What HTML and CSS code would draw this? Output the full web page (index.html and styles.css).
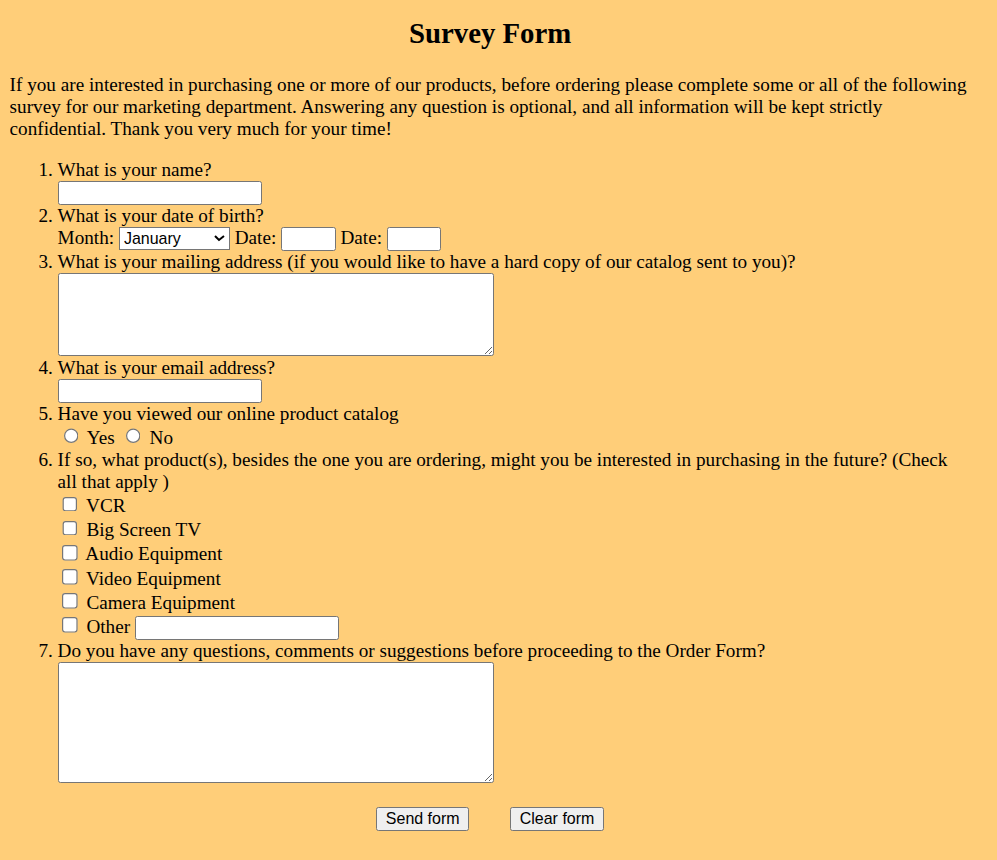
FILE: index.html
```html
<!DOCTYPE html>
<html lang="en">
<head>
<meta charset="utf-8">
<title>Survey Form</title>
<link rel="stylesheet" href="styles.css">
</head>
<body>
<h2 class="title">Survey Form</h2>
<p class="intro">If you are interested in purchasing one or more of our products, before ordering please complete some or all of the following survey for our marketing department. Answering any question is optional, and all information will be kept strictly confidential. Thank you very much for your time!</p>
<form class="survey">
<ol class="questions">
<li>What is your name?<br><input class="text" type="text"></li>
<li>What is your date of birth?<br>Month: <select class="month"><option>January</option><option>February</option><option>March</option><option>April</option><option>May</option><option>June</option><option>July</option><option>August</option><option>September</option><option>October</option><option>November</option><option>December</option></select> Date: <input class="small" type="text"> Date: <input class="small" type="text"></li>
<li>What is your mailing address (if you would like to have a hard copy of our catalog sent to you)?<br><textarea class="area"></textarea></li>
<li>What is your email address?<br><input class="text" type="text"></li>
<li>Have you viewed our online product catalog<br><input type="radio" name="viewed"> Yes <input type="radio" name="viewed"> No</li>
<li>If so, what product(s), besides the one you are ordering, might you be interested in purchasing in the future? (Check all that apply )<br>
<input type="checkbox"> VCR<br>
<input type="checkbox"> Big Screen TV<br>
<input type="checkbox"> Audio Equipment<br>
<input type="checkbox"> Video Equipment<br>
<input type="checkbox"> Camera Equipment<br>
<input type="checkbox"> Other <input class="text" type="text"></li>
<li>Do you have any questions, comments or suggestions before proceeding to the Order Form?<br><textarea class="area tall"></textarea></li>
</ol>
<p class="actions"><button type="submit" class="btn">Send form</button><button type="reset" class="btn">Clear form</button></p>
</form>
</body>
</html>
```
FILE: styles.css
```css
html {
  zoom: 1.2;
  background: #ffce79;
}
body {
  margin: 8px 22px 8px 8px;
  font-family: "Liberation Serif", "Times New Roman", serif;
  font-size: 16px;
  color: #000;
}
.title {
  text-align: center;
  font-size: 24px;
  margin: 6px 0 20px;
}
.intro {
  margin: 0 0 16px;
}
.questions {
  margin: 0;
  padding-left: 40px;
}
input, select, textarea, button {
  font-family: "Liberation Sans", Arial, sans-serif;
  font-size: 13.33px;
}
.text, .small {
  box-sizing: border-box;
  height: 20px;
  border: 1px solid #767676;
  border-radius: 2px;
  background: #fff;
  padding: 1px 2px;
  vertical-align: baseline;
}
.text { width: 170px; }
.small { width: 45.5px; }
.month {
  width: 92.5px;
  height: 19px;
  background: #fff;
}
.area {
  box-sizing: border-box;
  width: 363.5px;
  height: 69px;
  border: 1px solid #767676;
  border-radius: 2px;
  background: #fff;
  vertical-align: text-bottom;
  resize: both;
}
.area.tall { height: 101px; }
.actions {
  text-align: center;
  margin: 19px 0 0;
  display: flex;
  justify-content: center;
  gap: 34.5px;
}
.btn {
  background: #efefef;
  border: 1px solid #767676;
  border-radius: 2px;
  padding: 1.5px 7px;
  color: #000;
}
```
